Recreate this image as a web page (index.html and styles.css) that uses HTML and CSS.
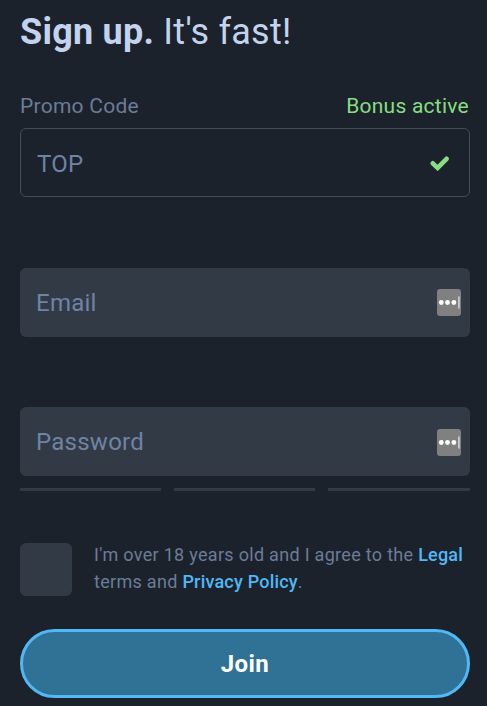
FILE: index.html
```html
<!DOCTYPE html>
<html lang="en">

<head>
    <meta charset="UTF-8">
    <meta name="viewport" content="width=device-width, initial-scale=1.0">
    <title>Sign up</title>
    <link rel="stylesheet" href="styles.css">
</head>

<body>
    <form class="signup">
        <h1><strong>Sign up.</strong> It's fast!</h1>

        <div class="label-row">
            <label for="promo">Promo Code</label>
            <span class="bonus">Bonus active</span>
        </div>
        <div class="field promo">
            <input type="text" id="promo" value="TOP">
            <svg class="check" viewBox="0 0 20 16">
                <path d="M2.8 8.3L7.6 12.9L16.6 3.8"/>
            </svg>
        </div>

        <div class="field">
            <input type="email" placeholder="Email">
            <svg class="filler" viewBox="0 0 24 27">
                <rect width="24" height="27" rx="3"/>
                <circle cx="4.3" cy="13.5" r="2.4"/>
                <circle cx="10.5" cy="13.5" r="2.4"/>
                <circle cx="16.9" cy="13.5" r="2.4"/>
                <path d="M21.9 7.5v12"/>
            </svg>
        </div>

        <div class="field">
            <input type="password" placeholder="Password">
            <svg class="filler low" viewBox="0 0 24 27">
                <rect width="24" height="27" rx="3"/>
                <circle cx="4.3" cy="13.5" r="2.4"/>
                <circle cx="10.5" cy="13.5" r="2.4"/>
                <circle cx="16.9" cy="13.5" r="2.4"/>
                <path d="M21.9 7.5v12"/>
            </svg>
        </div>
        <div class="strength">
            <span></span>
            <span></span>
            <span></span>
        </div>

        <div class="terms">
            <input type="checkbox" id="agree">
            <label for="agree">I'm over 18 years old and I agree to the <a href="#">Legal</a><br>terms and <a href="#">Privacy Policy</a>.</label>
        </div>

        <button type="submit" class="join">Join</button>
    </form>
</body>

</html>
```
FILE: styles.css
```css
* {
    box-sizing: border-box;
}

body {
    font-family: Roboto, sans-serif;
    background-color: #1c222b;
    color: #6b7c98;
    margin: 0;
}

.signup {
    width: 450px;
    margin-left: 20px;
    padding-top: 8px;
}

h1 {
    margin: 0 0 50px;
    font-size: 36px;
    font-weight: 400;
    line-height: 48px;
    letter-spacing: 0.24px;
    color: #c3d3ee;
}

h1 strong {
    font-weight: 700;
}

.label-row {
    display: flex;
    justify-content: space-between;
    height: 22px;
    font-size: 21px;
    line-height: 0;
    letter-spacing: 0.25px;
}

.bonus {
    margin-right: 1px;
    color: #88dc82;
}

.field {
    display: flex;
    align-items: center;
    height: 69px;
    margin-bottom: 70px;
    padding: 0 9px 0 16px;
    background-color: #323a46;
    border-radius: 6px;
}

.field.promo {
    margin-bottom: 71px;
    padding: 0 19px 0 16px;
    background-color: transparent;
    border: 1px solid #444c59;
}

.field input {
    flex: 1;
    min-width: 0;
    padding: 0;
    border: none;
    outline: none;
    background: none;
    color: #6f83a5;
    font-family: inherit;
    font-size: 24px;
    letter-spacing: 0.25px;
}

.field.promo input {
    padding-top: 2px;
}

.field input::placeholder {
    color: #6f83a5;
    opacity: 1;
}

.check {
    width: 20px;
    height: 16px;
    fill: none;
    stroke: #88dc82;
    stroke-width: 4.6;
    stroke-linecap: round;
}

.filler {
    width: 24px;
    height: 27px;
    fill: #808080;
}

.filler.low {
    margin-top: 2px;
}

.filler circle {
    fill: #fff;
}

.filler path {
    stroke: #ddd;
    stroke-width: 1.4;
}

.strength {
    display: grid;
    grid-template-columns: 141px 141px 142px;
    gap: 13px;
    margin-top: -58px;
}

.strength span {
    height: 3px;
    background-color: #323a46;
}

.terms {
    display: flex;
    margin-top: 52px;
    font-size: 18px;
    line-height: 27px;
    letter-spacing: 0.3px;
}

.terms input {
    appearance: none;
    flex: none;
    width: 52px;
    height: 53px;
    margin: 0 22px 0 0;
    background-color: #323a46;
    border-radius: 6px;
}

.terms label {
    white-space: nowrap;
    margin-top: -2px;
}

.terms a {
    color: #4fb8f5;
    font-weight: 500;
    letter-spacing: 0.2px;
    text-decoration: none;
}

.join {
    display: block;
    width: 100%;
    height: 69px;
    margin-top: 33px;
    padding: 0;
    background-color: #307295;
    border: 3px solid #4fb8f5;
    border-radius: 35px;
    color: #fff;
    font-family: inherit;
    font-size: 24px;
    font-weight: 700;
    letter-spacing: 0.4px;
}
```
